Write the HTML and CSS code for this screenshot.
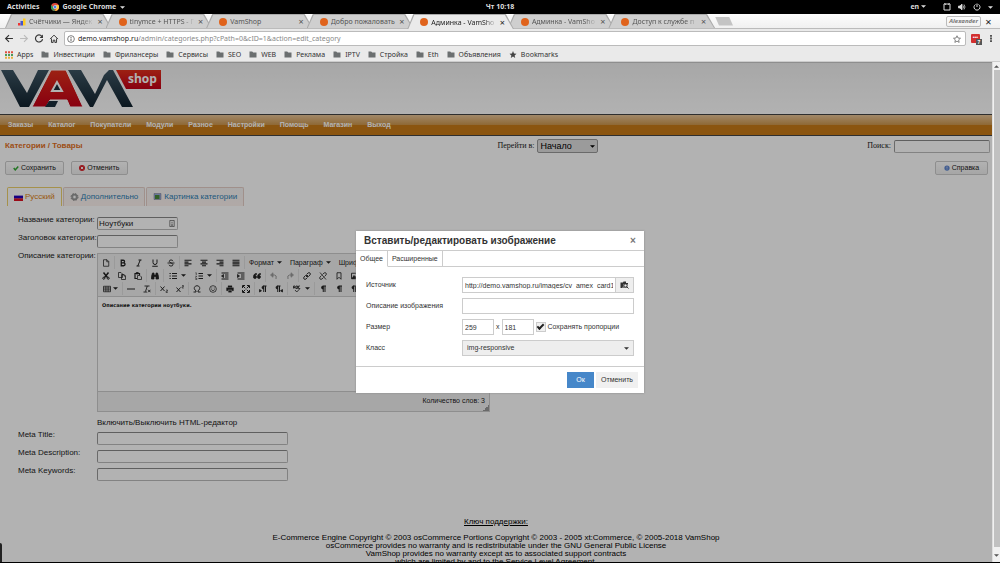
FILE: index.html
```html
<!DOCTYPE html>
<html lang="ru">
<head>
<meta charset="utf-8">
<title>Админка - VamShop</title>
<link rel="stylesheet" href="styles.css">
</head>
<body>
<svg class="defs" aria-hidden="true">
  <symbol id="folder" viewBox="0 0 8 7"><path d="M.5.5h2.700l1 1h3.300v5h-7z" fill="#6b6f70"/></symbol>
  <symbol id="caret" viewBox="0 0 4 4"><path d="M0 1h4L2 3z" fill="currentColor"/></symbol>
  <symbol id="doc" viewBox="0 0 16 16"><path d="M3 1.500h7l3.500 3.500v9.500h-10.500zM9.500 1.500v4h4"/></symbol>
  <symbol id="bold" viewBox="0 0 16 16"><path d="M4.500 2.500h4a2.500 2.500 0 0 1 0 5.200h-4zM4.500 7.700h4.700a2.800 2.800 0 0 1 0 5.800H4.500z" stroke-width="2.600"/></symbol>
  <symbol id="italic" viewBox="0 0 16 16"><path d="M7 2h6M3 14h6M10.500 2l-5 12" stroke-width="2"/></symbol>
  <symbol id="under" viewBox="0 0 16 16"><path d="M4 1v6a4 4 0 0 0 8 0V1M2.500 14.500h11" stroke-width="2"/></symbol>
  <symbol id="strike" viewBox="0 0 16 16"><path d="M12 4.500C11.500 1 4.500 1 4.500 4.500S12 8 12 11.500 4 15 4 11.500M1 8h14" stroke-width="1.800"/></symbol>
  <symbol id="al" viewBox="0 0 16 16"><path d="M1 2.500h14M1 6.200h8M1 9.800h14M1 13.500h8" stroke-width="2.300"/></symbol>
  <symbol id="ac" viewBox="0 0 16 16"><path d="M1 2.500h14M4 6.200h8M1 9.800h14M4 13.500h8" stroke-width="2.300"/></symbol>
  <symbol id="ar" viewBox="0 0 16 16"><path d="M1 2.500h14M7 6.200h8M1 9.800h14M7 13.500h8" stroke-width="2.300"/></symbol>
  <symbol id="aj" viewBox="0 0 16 16"><path d="M1 2.500h14M1 6.200h14M1 9.800h14M1 13.500h14" stroke-width="2.300"/></symbol>
  <symbol id="cut" viewBox="0 0 16 16"><path d="M3 1l8 10M13 1L5 11" stroke-width="3"/><circle cx="3.500" cy="12.500" r="2" stroke-width="2"/><circle cx="12.500" cy="12.500" r="2" stroke-width="2"/></symbol>
  <symbol id="copy" viewBox="0 0 16 16"><path d="M9 11H1V1h5l3 3v7M7 5h5l3 3v7H7zM12 5v3h3"/></symbol>
  <symbol id="paste" viewBox="0 0 16 16"><path d="M6 13H2V3h9v3" stroke-width="2.400"/><path d="M4.500 1h4v3h-4z" fill="currentColor"/><path d="M7 7h5l3 3v5H7z"/></symbol>
  <symbol id="find" viewBox="0 0 16 16"><path d="M3 2h3v4h4V2h3l2 7v5h-5V9H6v5H1V9z" fill="currentColor"/></symbol>
  <symbol id="ul" viewBox="0 0 16 16"><path d="M6 3h10M6 8h10M6 13h10M1 3h2.500M1 8h2.500M1 13h2.500" stroke-width="2.200"/></symbol>
  <symbol id="ol" viewBox="0 0 16 16"><path d="M7 3h9M7 8h9M7 13h9" stroke-width="2.200"/><path d="M1 1.500h1.500V6M.5 8.500H3.500L1 11M.5 12.500h3v3h-3" stroke-width="1.200"/></symbol>
  <symbol id="outd" viewBox="0 0 16 16"><path d="M1 2h14M8 6h7M8 10h7M1 14h14" stroke-width="2.300"/><path d="M5 5v6L1 8z" fill="currentColor"/></symbol>
  <symbol id="ind" viewBox="0 0 16 16"><path d="M1 2h14M8 6h7M8 10h7M1 14h14" stroke-width="2.300"/><path d="M1 5v6l4-3z" fill="currentColor"/></symbol>
  <symbol id="quote" viewBox="0 0 16 16"><path d="M7 3C3 3 1 6 1 9.500A3 3 0 1 0 4 7q0-2 3-2zM15 3c-4 0-6 3-6 6.500A3 3 0 1 0 12 7q0-2 3-2z" fill="currentColor"/></symbol>
  <symbol id="undo" viewBox="0 0 16 16"><path d="M4 6h5q5 0 3 8" stroke-width="2"/><path d="M6 1.500v9L1 6z" fill="currentColor"/></symbol>
  <symbol id="redo" viewBox="0 0 16 16"><path d="M12 6H7q-5 0-3 8" stroke-width="2"/><path d="M10 1.500v9L15 6z" fill="currentColor"/></symbol>
  <symbol id="link" viewBox="0 0 16 16"><path d="M7 5l3-3q2-1.500 4 0 1.500 2 0 4l-3 3H8M9 11l-3 3q-2 1.500-4 0-1.500-2 0-4l3-3h3M6 10l4-4" stroke-width="1.800"/></symbol>
  <symbol id="unlink" viewBox="0 0 16 16"><path d="M7 5l3-3q2-1.500 4 0 1.500 2 0 4l-3 3M9 11l-3 3q-2 1.500-4 0-1.500-2 0-4l3-3M2 1l12 14" stroke-width="1.600"/></symbol>
  <symbol id="mark" viewBox="0 0 16 16"><path d="M4 1.500h8v13L8 10.500l-4 4z" stroke-width="1.700"/></symbol>
  <symbol id="pic" viewBox="0 0 16 16"><path d="M1 2.500h14v11H1z" stroke-width="1.700"/><path d="M2 13l4-6 3 3 2-2 3 5z" fill="currentColor"/></symbol>
  <symbol id="table" viewBox="0 0 16 16"><path d="M1 2.500h14v11H1zM1 6h14M1 9.800h14M5.700 2.500v11M10.300 2.500v11"/></symbol>
  <symbol id="hr" viewBox="0 0 16 16"><path d="M0 8h16" stroke-width="2"/></symbol>
  <symbol id="clear" viewBox="0 0 16 16"><path d="M3 2h10M8.500 2L5 13M1 14h7M10 9.500l5 5M15 9.500l-5 5" stroke-width="1.800"/></symbol>
  <symbol id="sub" viewBox="0 0 16 16"><path d="M1 3l8 9M9 3l-8 9" stroke-width="1.900"/><path d="M12 10h3v2.500h-3V15h3.500" stroke-width="1.200"/></symbol>
  <symbol id="sup" viewBox="0 0 16 16"><path d="M1 5l8 9M9 5l-8 9" stroke-width="1.900"/><path d="M12 1h3v2.500h-3V6h3.500" stroke-width="1.200"/></symbol>
  <symbol id="omega" viewBox="0 0 16 16"><path d="M1 14h5v-2.500C0 8 2.500 1.500 8 1.500S16 8 10 11.500V14h5" stroke-width="1.900"/></symbol>
  <symbol id="smile" viewBox="0 0 16 16"><circle cx="8" cy="8" r="6.700"/><path d="M4.500 9q3.500 5 7 0M5.500 5v2M10.500 5v2"/></symbol>
  <symbol id="print" viewBox="0 0 16 16"><path d="M4 1.500h8v3H4zM1 5.500h14v6h-3v-2H4v2H1zM5 11h6v3.500H5z" fill="currentColor" stroke-width=".6"/></symbol>
  <symbol id="full" viewBox="0 0 16 16"><path d="M2 2l4.500 4.500M14 2L9.500 6.500M2 14l4.500-4.500M14 14L9.500 9.500M1 6V1h5M10 1h5v5M1 10v5h5M10 15h5v-5" stroke-width="2"/></symbol>
  <symbol id="pil" viewBox="0 0 16 16"><path d="M8 2h6M8.500 2v12M12 2v12" stroke-width="2"/><path d="M8 2a3 3 0 0 0 0 6z" fill="currentColor"/></symbol>
  <symbol id="ltr" viewBox="0 0 16 16"><path d="M8 2h7M9.500 2v12M13 2v12" stroke-width="2"/><path d="M9 2a3 3 0 0 0 0 6zM1 9v5l4-2.500z" fill="currentColor"/></symbol>
  <symbol id="rtl" viewBox="0 0 16 16"><path d="M4 2h7M5.500 2v12M9 2v12" stroke-width="2"/><path d="M5 2a3 3 0 0 0 0 6zM15 9v5l-4-2.500z" fill="currentColor"/></symbol>
  <symbol id="spell" viewBox="0 0 16 16"><path d="M1 7V2h3v5M1 5h3M6 2h3v5H6zM14 2h-3v5h3M4 10l3.500 4L14 7" stroke-width="1.600"/></symbol>
</svg>

<div class="screen">
  <header class="gnome">
    <div class="gnome-side"><span>Activities</span>
      <span class="app"><svg class="i8" viewBox="0 0 16 16"><circle cx="8" cy="8" r="8" fill="#dd4b3c"/><path d="M1 4l5 8 2 4A8 8 0 0 1 1 4z" fill="#2aa15a"/><path d="M15 4H8l3.500 6L8 16a8 8 0 0 0 7-12z" fill="#fccd3f"/><circle cx="8" cy="8" r="3.700" fill="#fff"/><circle cx="8" cy="8" r="2.900" fill="#4a80e8"/></svg>Google Chrome <svg class="caret"><use href="#caret"/></svg></span></div>
    <span>Чт 10:18</span>
    <div class="gnome-side end"><span>en <svg class="caret"><use href="#caret"/></svg></span>
      <span class="tray">
        <svg class="i8" viewBox="0 0 16 16" fill="none" stroke="#ddd" stroke-width="2"><path d="M2 2h12v12H2z"/><path d="M3 1l3 2M13 1l-3 2"/></svg>
        <svg class="i8" viewBox="0 0 16 16" fill="none" stroke="#ddd" stroke-width="1.500"><path d="M1 6h3l4-4v12l-4-4H1z" fill="#ddd"/><path d="M10 5q2 3 0 6M12 3q4 5 0 10"/></svg>
        <svg class="i8" viewBox="0 0 16 16" fill="none" stroke="#ddd" stroke-width="2"><path d="M5 3a6 6 0 1 0 6 0M8 1v7"/></svg>
        <svg class="caret"><use href="#caret"/></svg>
      </span></div>
  </header>

  <nav class="strip" aria-label="Вкладки браузера">
    <div class="tabs">
      <div class="tab"><div class="tab-in"><svg class="i8" viewBox="0 0 16 16"><path d="M0 10h5v5H0z" fill="#e33"/><path d="M5 6h5v9H5z" fill="#45c"/><path d="M10 1h5v14h-5z" fill="#fc2"/></svg><span class="fade">Счётчики — Яндек</span><i>×</i></div></div>
      <div class="tab"><div class="tab-in"><b class="dot"></b><span class="fade">tinymce + HTTPS - Г</span><i>×</i></div></div>
      <div class="tab"><div class="tab-in"><b class="dot"></b><span>VamShop</span><i>×</i></div></div>
      <div class="tab"><div class="tab-in"><b class="dot"></b><span>Добро пожаловать</span><i>×</i></div></div>
      <div class="tab active"><div class="tab-in"><b class="dot"></b><span class="fade">Админка - VamSho</span><i>×</i></div></div>
      <div class="tab"><div class="tab-in"><b class="dot"></b><span class="fade">Админка - VamSho</span><i>×</i></div></div>
      <div class="tab"><div class="tab-in"><b class="dot"></b><span class="fade">Доступ к службе п</span><i>×</i></div></div>
    </div>
    <div class="newtab"></div>
    <span class="user">Alexander</span><span class="winx">×</span>
  </nav>

  <div class="bar">
    <svg class="i9" viewBox="0 0 16 16"><path d="M15 8H2M8 2L2 8l6 6" fill="none" stroke="#333" stroke-width="2"/></svg>
    <svg class="i9" viewBox="0 0 16 16"><path d="M1 8h13M8 2l6 6-6 6" fill="none" stroke="#bbb" stroke-width="2"/></svg>
    <svg class="i9" viewBox="0 0 16 16"><path d="M13 4a6.300 6.300 0 1 0 1.300 5" fill="none" stroke="#333" stroke-width="2"/><path d="M15 1v6H9z" fill="#333"/></svg>
    <svg class="i9" viewBox="0 0 16 16"><path d="M1 9l7-7 7 7M3.500 8v7h3v-4h3v4h3V8" fill="none" stroke="#333" stroke-width="1.700"/></svg>
    <div class="url">
      <svg class="i8" viewBox="0 0 16 16"><circle cx="8" cy="8" r="6.700" fill="none" stroke="#555" stroke-width="1.500"/><path d="M8 4v2M8 7v5" stroke="#555" stroke-width="1.800"/></svg>
      <span class="addr"><span>demo.vamshop.ru</span>/admin/categories.php?cPath=0&amp;cID=1&amp;action=edit_category</span>
      <svg class="i8" viewBox="0 0 16 16"><path d="M8 1.500l2 4.500 5 .5-3.700 3.300 1 5L8 12.300l-4.300 2.500 1-5L1 6.500 6 6z" fill="none" stroke="#555" stroke-width="1.400"/></svg>
    </div>
    <span class="ext">•••<b>7</b></span>
    <svg class="dots" viewBox="0 0 4 10"><path d="M1 1h2v2H1zM1 4h2v2H1zM1 7h2v2H1z" fill="#444"/></svg>
  </div>

  <nav class="marks" aria-label="Закладки">
    <a href="#"><svg class="i8" viewBox="0 0 16 16"><path d="M0 2.500h16" stroke="#e05040" stroke-width="4" stroke-dasharray="4 2"/><path d="M0 8h16" stroke="#4a9a5a" stroke-width="4" stroke-dasharray="4 2"/><path d="M0 13.500h16" stroke="#e8b040" stroke-width="4" stroke-dasharray="4 2"/></svg>Apps</a>
    <a href="#"><svg class="fold"><use href="#folder"/></svg>Инвестиции</a>
    <a href="#"><svg class="fold"><use href="#folder"/></svg>Фрилансеры</a>
    <a href="#"><svg class="fold"><use href="#folder"/></svg>Сервисы</a>
    <a href="#"><svg class="fold"><use href="#folder"/></svg>SEO</a>
    <a href="#"><svg class="fold"><use href="#folder"/></svg>WEB</a>
    <a href="#"><svg class="fold"><use href="#folder"/></svg>Реклама</a>
    <a href="#"><svg class="fold"><use href="#folder"/></svg>IPTV</a>
    <a href="#"><svg class="fold"><use href="#folder"/></svg>Стройка</a>
    <a href="#"><svg class="fold"><use href="#folder"/></svg>Eth</a>
    <a href="#"><svg class="fold"><use href="#folder"/></svg>Объявления</a>
    <a href="#"><svg class="fold" viewBox="0 0 16 16"><path d="M8 0l2.300 5.500 5.700.5-4.300 4 1.300 6-5-3.300L3 16l1.300-6L0 6l5.700-.5z" fill="#444"/></svg>Bookmarks</a>
  </nav>

  <div class="view">
    <main class="page">
      <div class="brand">
        <svg class="logo" viewBox="0 0 162 40" role="img" aria-label="VAM shop">
          <defs><linearGradient id="lg" x1="0" y1="0" x2="0" y2="1"><stop offset="0" stop-color="#3d5563"/><stop offset="1" stop-color="#12232f"/></linearGradient>
          <linearGradient id="rg" x1="0" y1="0" x2="0" y2="1"><stop offset="0" stop-color="#e0301c"/><stop offset="1" stop-color="#c40018"/></linearGradient></defs>
          <path d="M1 1h12l14 23L38 1h11L29 38h-9z" fill="url(#lg)"/>
          <path d="M68 1h13l14 24 9-19 5-5 4 0 20 37h-11l-15-27-14 27H90z" fill="url(#lg)"/>
          <path d="M51 1h15l17 37H70l-3-7H50l-4 7H32z" fill="url(#rg)" stroke="#fff"/>
          <path d="M57 13l-5 9h10z" fill="#1b2f3c" stroke="#fff" stroke-width="2"/>
          <path d="M49 32h9l-3 6H45z" fill="#1b2f3c"/>
          <path d="M116 1h45v19h-35z" fill="url(#rg)"/>
          <text x="128" y="14" class="logo-t">shop</text>
        </svg>
      </div>
      <nav class="menu" aria-label="Меню"><a href="#">Заказы</a><a href="#">Каталог</a><a href="#">Покупатели</a><a href="#">Модули</a><a href="#">Разное</a><a href="#">Настройки</a><a href="#">Помощь</a><a href="#">Магазин</a><a href="#">Выход</a></nav>

      <div class="head">
        <h1>Категории / Товары</h1>
        <div class="jump"><label for="go">Перейти в:</label><div class="pick"><select id="go"><option>Начало</option></select><svg class="caret"><use href="#caret"/></svg></div></div>
        <div class="search"><label for="q">Поиск:</label><input id="q" type="text"></div>
      </div>
      <div class="actions">
        <button type="button" class="btn"><svg viewBox="0 0 16 16"><path d="M2 8l4 5 8-9" fill="none" stroke="#3a3" stroke-width="4"/></svg>Сохранить</button>
        <button type="button" class="btn"><svg viewBox="0 0 16 16"><circle cx="8" cy="8" r="8" fill="#d8232a"/><path d="M5 5l6 6M11 5l-6 6" stroke="#fff" stroke-width="2.500"/></svg>Отменить</button>
        <button type="button" class="btn help"><svg viewBox="0 0 16 16"><circle cx="8" cy="8" r="7" fill="#5f87d0"/><path d="M8 4v5M8 10v2" stroke="#dde" stroke-width="2"/></svg>Справка</button>
      </div>
      <div class="langs">
        <a href="#" class="on"><svg viewBox="0 0 9 8"><path fill="#fff" d="M0 0h9v3H0z"/><path fill="#20b" d="M0 2.600h9v3H0z"/><path fill="#d12" d="M0 5.400h9V8H0z"/></svg>Русский</a>
        <a href="#"><svg viewBox="0 0 16 16"><circle cx="8" cy="8" r="5" fill="#ccc" stroke="#999" stroke-width="3"/><circle cx="8" cy="8" r="7" fill="none" stroke="#888" stroke-width="2" stroke-dasharray="3 2.500"/><circle cx="8" cy="8" r="2" fill="#fff"/></svg>Дополнительно</a>
        <a href="#"><svg viewBox="0 0 16 16"><path d="M1 1h14v12H1z" fill="#9ad" stroke="#778"/><path d="M3 4h9v8H3z" fill="#4a8a3a"/></svg>Картинка категории</a>
      </div>

      <form class="form">
        <label for="name">Название категории:</label>
        <div class="namebox"><input id="name" type="text" value="Ноутбуки"><svg viewBox="0 0 12 16"><path d="M1 1h10v14H1zM6 4v4M6 9v3M4 12h4" fill="none" stroke="#444" stroke-width="1.500"/></svg></div>
        <label for="ttl">Заголовок категории:</label>
        <input id="ttl" class="short" type="text">
        <label for="desc">Описание категории:</label>
        <div class="editor">
          <div class="tools">
            <div class="trow">
              <div><button type="button" aria-label="Новый"><svg><use href="#doc"/></svg></button></div>
              <div><button type="button" aria-label="Жирный"><svg><use href="#bold"/></svg></button><button type="button" aria-label="Курсив"><svg><use href="#italic"/></svg></button><button type="button" aria-label="Подчёркнутый"><svg><use href="#under"/></svg></button><button type="button" aria-label="Зачёркнутый"><svg><use href="#strike"/></svg></button></div>
              <div><button type="button" aria-label="Влево"><svg><use href="#al"/></svg></button><button type="button" aria-label="По центру"><svg><use href="#ac"/></svg></button><button type="button" aria-label="Вправо"><svg><use href="#ar"/></svg></button><button type="button" aria-label="По ширине"><svg><use href="#aj"/></svg></button></div>
              <div><button type="button" class="txt">Формат <svg class="caret"><use href="#caret"/></svg></button><button type="button" class="txt">Параграф <svg class="caret"><use href="#caret"/></svg></button><button type="button" class="txt">Шрифт <svg class="caret"><use href="#caret"/></svg></button></div>
            </div>
            <div class="trow">
              <div><button type="button" aria-label="Вырезать"><svg><use href="#cut"/></svg></button><button type="button" aria-label="Копировать"><svg><use href="#copy"/></svg></button><button type="button" aria-label="Вставить"><svg><use href="#paste"/></svg></button></div>
              <div><button type="button" aria-label="Найти"><svg><use href="#find"/></svg></button></div>
              <div><button type="button" class="wide" aria-label="Маркеры"><svg><use href="#ul"/></svg><svg class="caret"><use href="#caret"/></svg></button><button type="button" class="wide" aria-label="Нумерация"><svg><use href="#ol"/></svg><svg class="caret"><use href="#caret"/></svg></button></div>
              <div><button type="button" aria-label="Уменьшить отступ"><svg><use href="#outd"/></svg></button><button type="button" aria-label="Увеличить отступ"><svg><use href="#ind"/></svg></button><button type="button" aria-label="Цитата"><svg><use href="#quote"/></svg></button></div>
              <div class="off"><button type="button" aria-label="Отменить действие"><svg><use href="#undo"/></svg></button><button type="button" aria-label="Вернуть"><svg><use href="#redo"/></svg></button></div>
              <div><button type="button" aria-label="Ссылка"><svg><use href="#link"/></svg></button><button type="button" aria-label="Убрать ссылку"><svg><use href="#unlink"/></svg></button><button type="button" aria-label="Якорь"><svg><use href="#mark"/></svg></button><button type="button" aria-label="Изображение"><svg><use href="#pic"/></svg></button></div>
            </div>
            <div class="trow">
              <div><button type="button" class="wide tbl" aria-label="Таблица"><svg><use href="#table"/></svg><svg class="caret"><use href="#caret"/></svg></button></div>
              <div><button type="button" aria-label="Линия"><svg><use href="#hr"/></svg></button><button type="button" aria-label="Очистить формат"><svg><use href="#clear"/></svg></button></div>
              <div><button type="button" aria-label="Нижний индекс"><svg><use href="#sub"/></svg></button><button type="button" aria-label="Верхний индекс"><svg><use href="#sup"/></svg></button></div>
              <div><button type="button" aria-label="Символ"><svg><use href="#omega"/></svg></button><button type="button" aria-label="Смайл"><svg><use href="#smile"/></svg></button></div>
              <div><button type="button" aria-label="Печать"><svg><use href="#print"/></svg></button><button type="button" aria-label="Во весь экран"><svg><use href="#full"/></svg></button></div>
              <div><button type="button" aria-label="Слева направо"><svg><use href="#ltr"/></svg></button><button type="button" aria-label="Справа налево"><svg><use href="#rtl"/></svg></button></div>
              <div><button type="button" class="wide" aria-label="Орфография"><svg><use href="#spell"/></svg><svg class="caret"><use href="#caret"/></svg></button></div>
              <div><button type="button" aria-label="Знаки"><svg><use href="#pil"/></svg></button><button type="button" aria-label="Блоки"><svg><use href="#pil"/></svg></button><button type="button" aria-label="Разрыв"><svg><use href="#rtl"/></svg></button></div>
            </div>
          </div>
          <textarea id="desc">Описание категории ноутбуки.</textarea>
          <div class="status">Количество слов: 3</div>
        </div>
        <span class="toggle">Включить/Выключить HTML-редактор</span>
        <label for="mt">Meta Title:</label><input id="mt" class="long" type="text">
        <label for="md">Meta Description:</label><input id="md" class="long" type="text">
        <label for="mk">Meta Keywords:</label><input id="mk" class="long" type="text">
      </form>

      <footer class="foot">
        <a href="#">Ключ поддержки:</a>
        <p>E-Commerce Engine Copyright © 2003 osCommerce Portions Copyright © 2003 - 2005 xt:Commerce, © 2005-2018 VamShop<br>osCommerce provides no warranty and is redistributable under the GNU General Public License<br>VamShop provides no warranty except as to associated support contracts<br>which are limited by and to the Service Level Agreement.</p>
      </footer>
      <div class="shade"></div>
      <div class="hint"></div>
    </main>
    <div class="scroll"><svg class="caret up"><use href="#caret"/></svg><div class="thumb"></div><svg class="caret"><use href="#caret"/></svg></div>

    <section class="modal" role="dialog" aria-labelledby="mtitle">
      <header><h2 id="mtitle">Вставить/редактировать изображение</h2><button type="button" aria-label="Закрыть">×</button></header>
      <div class="mtabs"><button type="button" class="on">Общее</button><button type="button">Расширенные</button></div>
      <div class="mbody">
        <label for="src">Источник</label>
        <div class="src"><input id="src" type="text" value="http://demo.vamshop.ru/images/cv_amex_card1.gif"><button type="button" aria-label="Обзор"><svg viewBox="0 0 18 16"><path d="M1 3h5l1-2h5v3h4v3H7l-2 7H1z" fill="#333"/><path d="M6 6h9v8H6z" fill="#777"/><circle cx="11" cy="9" r="3" fill="#eee" stroke="#333" stroke-width="1.500"/><path d="M13 11l4 4" stroke="#333" stroke-width="2"/></svg></button></div>
        <label for="alt">Описание изображения</label>
        <input id="alt" type="text">
        <label for="w">Размер</label>
        <div class="size"><input id="w" type="text" value="259"><span>x</span><input aria-label="Высота" type="text" value="181"><label><input type="checkbox" checked>Сохранять пропорции</label></div>
        <label for="cls">Класс</label>
        <div class="cls"><select id="cls"><option>img-responsive</option></select><svg class="caret"><use href="#caret"/></svg></div>
      </div>
      <footer><button type="button" class="ok">Ок</button><button type="button">Отменить</button></footer>
    </section>
  </div>
</div>
</body>
</html>
```
FILE: styles.css
```css
* { box-sizing: border-box; }
body { margin: 0; font: 8px/10px "Liberation Sans", Arial, sans-serif; color: #222; background: #000; }
button, input, select, textarea { font: inherit; color: inherit; margin: 0; border-radius: 0; }
a { color: inherit; text-decoration: none; }
.defs { display: none; }
.screen { height: 100vh; display: flex; flex-direction: column; border-bottom: 1px solid #000; overflow: hidden; }
.i8 { width: 8px; height: 8px; flex: none; }
.i9 { width: 10px; height: 9px; flex: none; }
.caret { width: 5px; height: 5px; flex: none; }

/* desktop bar */
.gnome { height: 14px; flex: none; background: #000; color: #ddd; display: flex; align-items: center; padding: 0 7px; font: bold 7px/14px "Noto Sans", sans-serif; }
.gnome-side { flex: 1; display: flex; gap: 11px; align-items: center; }
.gnome-side.end { justify-content: flex-end; gap: 17px; }
.app, .tray { display: flex; align-items: center; gap: 4px; }
.tray { gap: 7px; }

/* browser tabs */
.strip { height: 15px; flex: none; display: flex; align-items: center; padding: 0 4px 0 5px; background: linear-gradient(#fdfdfd, #f0f0f0); border-bottom: 1px solid #bbb; font: 7px/13px "Noto Sans", sans-serif; color: #555; }
.tabs { display: flex; flex: 0 1 704px; min-width: 0; align-self: stretch; }
.tab { flex: 1; min-width: 0; margin-right: -6px; padding: 1px 1px 0; background: #aaa; clip-path: polygon(0 100%, 6px 0, calc(100% - 8px) 0, 100% 100%); }
.tab-in { height: 100%; display: flex; align-items: center; gap: 3px; padding: 0 8px 0 12px; background: #cfcfcf; clip-path: polygon(0 100%, 6px 0, calc(100% - 8px) 0, 100% 100%); }
.tab span { flex: 1; min-width: 0; white-space: nowrap; overflow: hidden; }
.tab .fade { -webkit-mask-image: linear-gradient(90deg, #000 80%, transparent); mask-image: linear-gradient(90deg, #000 80%, transparent); }
.tab i { font-style: normal; font-size: 9px; }
.tab.active { z-index: 1; color: #222; margin-bottom: -1px; }
.active .tab-in { background: #eaeaea; }
.dot { width: 8px; height: 8px; border-radius: 50%; background: #e0631c; flex: none; }
.newtab { width: 18px; height: 9px; margin-left: 6px; background: #c4c4c4; clip-path: polygon(0 0, 14px 0, 100% 100%, 4px 100%); }
.user { margin-left: auto; border: 1px solid #bbb; border-radius: 2px; padding: 0 2px; font: italic bold 6px/9px "Noto Sans", sans-serif; color: #777; }
.winx { width: 15px; text-align: center; font-size: 11px; color: #222; }

/* address bar */
.bar { height: 19px; flex: none; background: #eaeaea; display: flex; align-items: center; gap: 5px; padding: 0 7px 0 4px; }
.url { flex: 1; height: 15px; display: flex; align-items: center; gap: 3px; padding: 0 4px 0 2px; background: #fff; border: 1px solid #bbb; border-radius: 2px; }
.addr { flex: 1; font: 7px/13px "Noto Sans", sans-serif; color: #888; }
.addr span { color: #222; }
.ext { position: relative; width: 9px; height: 9px; background: #d22f2f; border-radius: 1px; color: #fff; font-size: 5px; line-height: 7px; text-align: center; }
.ext b { position: absolute; left: 5px; top: 5px; width: 6px; height: 6px; line-height: 6px; background: #555; }
.dots { width: 4px; height: 9px; margin-left: 4px; }
.marks { height: 14px; flex: none; display: flex; align-items: center; gap: 8px; padding: 0 5px; background: #eaeaea; border-bottom: 1px solid #ccc; font: 7px/13px "Noto Sans", sans-serif; color: #333; }
.marks a { display: flex; align-items: center; gap: 4px; }
.fold { width: 8px; height: 7px; }

/* admin page */
.view { position: relative; flex: 1; min-height: 0; display: flex; }
.page { position: relative; flex: 1; min-width: 0; overflow: hidden; background: #fff; display: flex; flex-direction: column; }
.shade { position: absolute; inset: 0; background: #000; opacity: .3; }
.hint { position: absolute; left: 0; bottom: 0; width: 2px; height: 19px; background: #222; border-radius: 0 2px 0 0; }
.brand { height: 52px; flex: none; padding: 6px 0 0; background: linear-gradient(#f0f0f0, #fff); border-top: 1px solid #ccc; }
.logo { display: block; width: 162px; height: 40px; }
.logo-t { font: bold 12px "Open Sans", sans-serif; fill: #fff; }
.menu { height: 22px; flex: none; display: flex; align-items: center; gap: 15px; padding: 0 8px; border-top: 1px solid #444; border-bottom: 1px solid #444; background: linear-gradient(#e8c498, #cd9850 48%, #c87a18 50%, #c87a18); color: #fff; font-weight: bold; font-size: 7px; }
.head { display: grid; grid-template-columns: 50% 1fr auto; align-items: center; padding: 2px 2px 0 5px; }
.head h1 { margin: 0; font-size: 8px; line-height: 16px; color: #e2701c; }
.jump, .search { display: flex; align-items: center; gap: 3px; font: 8px/14px "Liberation Serif", serif; }
.pick { display: flex; align-items: center; width: 61px; height: 14px; background: #dedede; border: 1px solid #999; border-radius: 2px; color: #000; }
.pick select { appearance: none; flex: 1; min-width: 0; padding: 0 2px; border: 0; background: none; font: 9px/12px "Liberation Sans", sans-serif; }
.pick .caret { margin-right: 2px; }
.search input { width: 96px; }
.page input { height: 13px; padding: 0 1px; background: #fff; border: 1px solid #bbb; border-top-color: #888; border-left-color: #999; border-radius: 2px; }
.actions { display: flex; gap: 7px; padding: 7px 4px 0 5px; }
.btn { min-width: 57px; height: 14px; padding: 0 7px; display: flex; align-items: center; justify-content: center; gap: 2px; font-size: 7px; background: linear-gradient(#fff, #eee); border: 1px solid #ccc; border-radius: 2px; }
.btn svg { width: 6px; height: 6px; }
.help { min-width: 53px; margin-left: auto; }
.langs { display: flex; gap: 1px; padding: 12px 7px 0; color: #2c7fb5; }
.langs a { height: 19px; display: flex; align-items: center; gap: 2px; padding: 0 6px; border: 1px solid #e6cfc8; border-bottom: 0; border-radius: 2px 2px 0 0; background: linear-gradient(#f4f4f4, #fdf2ee); }
.langs svg { width: 9px; height: 8px; }
.langs .on { color: #dd8010; background: #fff; border-color: #ecd06c; }

.form { display: grid; grid-template-columns: 79px auto; justify-content: start; justify-items: start; row-gap: 5px; padding: 11px 18px 0; white-space: nowrap; }
.form > label { line-height: 6px; }
.namebox { position: relative; }
.namebox svg { position: absolute; right: 3px; top: 3px; width: 6px; height: 7px; }
.namebox input, .short { display: block; width: 81px; }
.long { width: 191px; }
.editor { width: 393px; border: 1px solid #ccc; }
.tools { background: #f0f0f0; border-bottom: 1px solid #ccc; padding: 2px 0 1px; overflow: hidden; }
.trow { display: flex; height: 13px; }
.trow > div { display: flex; flex: none; }
.trow > div + div { border-left: 1px solid #ddd; }
.tools button { width: 16px; padding: 0; border: 0; background: none; display: flex; align-items: center; justify-content: center; }
.tools button svg { width: 8px; height: 8px; fill: none; stroke: currentColor; stroke-width: 1.500px; }
.tools button .caret { width: 5px; height: 5px; stroke: none; }
.tools .wide { width: 26px; gap: 4px; }
.tools .tbl { width: 24px; gap: 2px; }
.tools .txt { width: auto; padding: 0 4px; gap: 3px; font-size: 7px; }
.tools .off { color: #999; }
.editor textarea { display: block; width: 100%; height: 94px; padding: 5px 4px; border: 0; resize: none; background: #fff; font: bold 5px/7px "DejaVu Sans", sans-serif; }
.status { height: 20px; padding: 0 4px; text-align: right; font-size: 7px; line-height: 18px; background: linear-gradient(135deg, transparent 50%, #999 50%) right bottom / 6px 6px no-repeat #f0f0f0; border-top: 1px solid #ccc; }
.toggle { grid-column: 2; margin: 1px 0 -1px; }
.foot { margin-top: 37px; text-align: center; line-height: 8px; color: #000; }
.foot a { text-decoration: underline; }
.foot p { margin: 8px 0 0; white-space: nowrap; }

.scroll { width: 8px; display: flex; flex-direction: column; align-items: center; background: #f1f1f1; border-left: 1px solid #ddd; padding: 2px 0 4px; gap: 1px; color: #555; }
.thumb { flex: 1; width: 6px; margin-bottom: 5px; background: #c1c1c1; }
.up { transform: rotate(180deg); }

/* dialog */
.modal { position: absolute; left: 50%; bottom: 169px; width: 288px; margin-left: -144px; background: #fff; color: #333; font-size: 7px; box-shadow: 0 0 2px #888; }
.modal > header { height: 20px; display: flex; align-items: center; justify-content: space-between; padding: 0 7px 0 8px; border-bottom: 1px solid #ccc; }
.modal h2 { margin: 0; font-size: 10px; line-height: 20px; }
.modal header button { border: 0; background: none; padding: 0; width: 8px; font: bold 10px/12px "Liberation Sans", sans-serif; color: #777; }
.mtabs { display: flex; height: 16px; border-bottom: 1px solid #ccc; }
.mtabs button { border: 0; border-right: 1px solid #ccc; border-bottom: 1px solid #ccc; background: #fff; padding: 0 4px; height: 16px; }
.mtabs .on { border-bottom-color: #fff; }
.mbody { display: grid; grid-template-columns: 96px 1fr; row-gap: 5px; align-items: center; padding: 10px 10px 10px; }
.mbody input, .cls { height: 16px; border: 1px solid #ccc; background: #fff; padding: 0 2px; min-width: 0; }
.src { display: flex; }
.src input { flex: 1; }
.src button { width: 18px; height: 16px; padding: 0; border: 1px solid #ccc; border-left: 0; background: #eee; display: flex; align-items: center; justify-content: center; }
.src svg { width: 9px; height: 8px; }
.size { display: flex; align-items: center; gap: 2px; }
.size input { width: 32px; }
.size label { display: flex; align-items: center; gap: 2px; }
.size [type=checkbox] { appearance: none; width: 10px; height: 10px; padding: 0; background: #f0f0f0; display: grid; place-items: center; }
.size [type=checkbox]::after { content: ""; box-sizing: border-box; width: 7px; height: 4px; margin-bottom: 2px; border: solid #222; border-width: 0 0 2px 2px; rotate: -45deg; }
.cls { position: relative; background: #eee; padding: 0; display: flex; align-items: center; }
.cls select { appearance: none; flex: 1; height: 14px; padding: 0 4px; border: 0; background: none; }
.cls .caret { margin-right: 4px; }
.modal > footer { display: flex; justify-content: flex-end; gap: 2px; padding: 5px 6px; border-top: 1px solid #ccc; }
.modal footer button { height: 16px; padding: 0 5px; border: 0; background: #f0f0f0; }
.modal footer .ok { width: 27px; background: #4687c9; color: #fff; }
```
